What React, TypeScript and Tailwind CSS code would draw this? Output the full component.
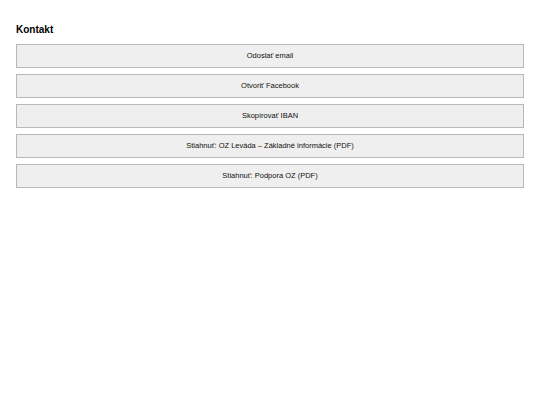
const actions = [
  'Odoslať email',
  'Otvoriť Facebook',
  'Skopírovať IBAN',
  'Stiahnuť: OZ Leváda – Základné informácie (PDF)',
  'Stiahnuť: Podpora OZ (PDF)',
];

export default function App() {
  return (
    <div className="min-h-[405px] bg-white px-4 pt-[23px] font-['Liberation_Sans',Arial,sans-serif] text-black">
      <h2 className="text-[10px] leading-[13px] font-bold">Kontakt</h2>
      <div className="mt-[8px] flex flex-col gap-[6px]">
        {actions.map((label) => (
          <button
            key={label}
            type="button"
            className="h-[24px] w-full border border-[#b8b8b8] bg-[#efefef] text-center text-[7.5px] leading-none text-[#111]"
          >
            {label}
          </button>
        ))}
      </div>
    </div>
  );
}
